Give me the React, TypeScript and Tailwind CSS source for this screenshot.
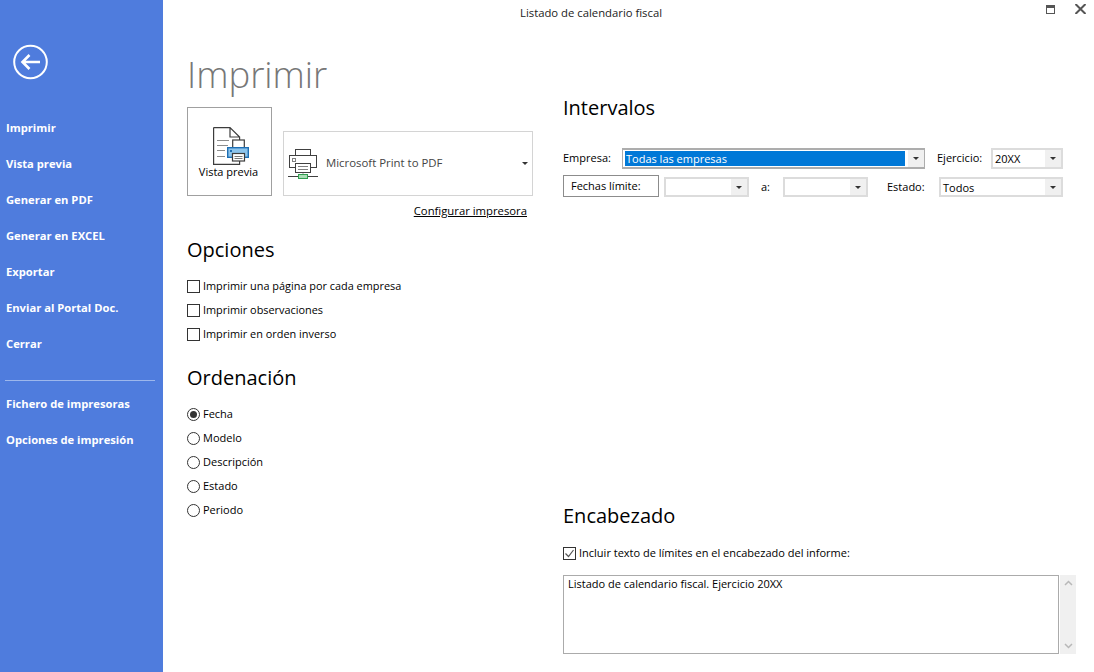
const font = { fontFamily: '"Open Sans", "Noto Sans", sans-serif' };

const menuTop = ['Imprimir', 'Vista previa', 'Generar en PDF', 'Generar en EXCEL', 'Exportar', 'Enviar al Portal Doc.', 'Cerrar'];
const menuBottom = ['Fichero de impresoras', 'Opciones de impresión'];
const checks = ['Imprimir una página por cada empresa', 'Imprimir observaciones', 'Imprimir en orden inverso'];
const radios = ['Fecha', 'Modelo', 'Descripción', 'Estado', 'Periodo'];

const Caret = ({ className = '' }: { className?: string }) => (
  <svg width="6" height="3" viewBox="0 0 6 3" className={className}>
    <path d="M0 0h6L3 3z" fill="#333" />
  </svg>
);

const Combo = ({ value, className }: { value?: string; className: string }) => (
  <div className={`flex border-2 border-[#dcdcdc] bg-white ${className}`}>
    <div className="flex-1 pl-[2px] text-[11px] leading-[18px] text-black">{value}</div>
    <div className="flex w-[16px] items-center justify-center bg-[#f0f0f0]">
      <Caret />
    </div>
  </div>
);

const DocPrinterIcon = () => (
  <svg width="36" height="38" viewBox="0 0 36 38" className="ml-[3px] block">
    <path d="M0.6 0.6H17L26.6 10V34V37.4H0.6V0.6M17 0.6V10H26.6" fill="#fff" stroke="#3c3c3c" strokeWidth="1.2" />
    <path d="M4 13.5h12M4 18.5h11M4 23.5h8M4 29.5h8" stroke="#8c8c8c" strokeWidth="1.2" />
    <rect x="19.7" y="13" width="11.6" height="8" fill="#fff" stroke="#3c3c3c" strokeWidth="1.2" />
    <rect x="14.7" y="20.7" width="20.6" height="9.6" fill="#8cc4ec" stroke="#1e6fb4" strokeWidth="1.4" />
    <rect x="17" y="23" width="2" height="2" fill="#1e6fb4" />
    <rect x="19.5" y="26.5" width="12" height="7.5" fill="#fff" stroke="#3c3c3c" strokeWidth="1.2" />
    <path d="M21.5 29.5h8M21.5 31.5h8" stroke="#7a7a7a" strokeWidth="1" />
  </svg>
);

const NetworkPrinterIcon = () => (
  <svg width="30" height="30" viewBox="0 0 30 30" className="block">
    <rect x="7.5" y="0.5" width="15" height="6" fill="#fff" stroke="#404040" />
    <rect x="1.5" y="6.5" width="27" height="12" fill="#fff" stroke="#404040" />
    <rect x="4.5" y="9.5" width="3" height="3" fill="#fff" stroke="#808080" />
    <rect x="7.5" y="14.5" width="15" height="9" fill="#fff" stroke="#404040" />
    <path d="M10 17.5h10M10 20.5h10" stroke="#808080" />
    <path d="M15 24v2" stroke="#a0a0a0" />
    <path d="M0 27.5h30" stroke="#404040" />
    <rect x="10.5" y="25.5" width="9" height="4" fill="#a9dcb4" stroke="#2f9e4f" />
  </svg>
);

const Check = ({ checked }: { checked?: boolean }) => (
  <div className="flex h-[13px] w-[13px] shrink-0 items-center justify-center border border-[#333] bg-white">
    {checked && (
      <svg width="11" height="11" viewBox="0 0 11 11">
        <path d="M1.5 5.5L4.5 8.5L9.5 2" fill="none" stroke="#555" strokeWidth="1.2" />
      </svg>
    )}
  </div>
);

const Radio = ({ checked }: { checked?: boolean }) => (
  <div className="flex h-[13px] w-[13px] shrink-0 items-center justify-center rounded-full border border-[#333] bg-white">
    {checked && <div className="h-[7px] w-[7px] rounded-full bg-[#333]" />}
  </div>
);

export default function App() {
  return (
    <div className="flex h-[672px] w-[1094px] overflow-hidden bg-white text-black" style={font}>
      <aside className="flex h-full w-[163px] shrink-0 flex-col bg-[#4f7cdd] pl-[6px] text-white">
        <svg width="36" height="36" viewBox="0 0 36 36" className="ml-[7px] mt-[44px] block">
          <circle cx="17.5" cy="18" r="16.3" fill="none" stroke="#fff" strokeWidth="2" />
          <path d="M27 18H11M16.5 11L9.5 18L16.5 25" fill="none" stroke="#fff" strokeWidth="2.6" />
        </svg>
        <nav className="mt-[30px] flex flex-col">
          {menuTop.map(item => (
            <div key={item} className="h-[36px] text-[11.2px] font-bold leading-[36px]">
              {item}
            </div>
          ))}
        </nav>
        <div className="ml-[-1px] mt-[18px] h-px w-[150px] bg-[#9db7ec]" />
        <nav className="mt-[5px] flex flex-col">
          {menuBottom.map(item => (
            <div key={item} className="h-[36px] text-[11.2px] font-bold leading-[36px]">
              {item}
            </div>
          ))}
        </nav>
      </aside>

      <main className="min-w-0 flex-1">
        <header className="flex h-[26px] items-start">
          <div className="ml-[357px] text-[11.3px] leading-[26px] text-[#222]">Listado de calendario fiscal</div>
          <div className="ml-auto mr-[8px] mt-[4px] flex items-start gap-[20px]">
            <div className="mt-[1px] h-[9px] w-[9px] border border-[#555] border-t-[3px]" />
            <svg width="11" height="10" viewBox="0 0 11 10" className="block">
              <path d="M0.5 0L10.5 10M10.5 0L0.5 10" stroke="#555" strokeWidth="2" />
            </svg>
          </div>
        </header>

        <div className="flex">
          <section className="ml-[24px] w-[352px] shrink-0">
            <h1 className="mt-[20px] h-[61px] text-[36.5px] font-light leading-[56px] text-[#777]">Imprimir</h1>
            <div className="flex items-end gap-[11px]">
              <button className="flex h-[89px] w-[85px] flex-col items-center border border-[#a0a0a0] pt-[19px]">
                <DocPrinterIcon />
                <span className="mr-[2px] mt-[-1px] text-[11px] leading-[16px] text-black">Vista previa</span>
              </button>
              <div className="flex h-[65px] w-[250px] items-center border border-[#d4d4d4] pl-[4px] pr-[4px]">
                <NetworkPrinterIcon />
                <span className="mb-[2px] ml-[8px] flex-1 text-[11.4px] text-[#444]">Microsoft Print to PDF</span>
                <Caret />
              </div>
            </div>
            <div className="mr-[12px] mt-[7px] text-right text-[11.3px] leading-[16px] underline">Configurar impresora</div>

            <h2 className="mt-[17px] text-[20px] leading-[28px]">Opciones</h2>
            <div className="mt-[14px] flex flex-col gap-[8px]">
              {checks.map(item => (
                <label key={item} className="flex h-[16px] items-center gap-[3px] text-[10.9px]">
                  <Check />
                  {item}
                </label>
              ))}
            </div>

            <h2 className="mt-[22px] text-[20px] leading-[28px]">Ordenación</h2>
            <div className="mt-[14px] flex flex-col gap-[8px]">
              {radios.map((item, i) => (
                <label key={item} className="flex h-[16px] items-center gap-[3px] text-[11px]">
                  <Radio checked={i === 0} />
                  {item}
                </label>
              ))}
            </div>
          </section>

          <section className="ml-[24px] w-[513px] shrink-0">
            <h2 className="mt-[68px] text-[20px] leading-[28px]">Intervalos</h2>
            <div className="mt-[26px] flex items-center text-[11px]">
              <span className="w-[59px]">Empresa:</span>
              <div className="flex h-[21px] w-[303px] border-x border-y-2 border-[#adadad] bg-white">
                <div className="my-[1px] ml-[2px] w-[280px] bg-[#0078d7] pl-[1px] leading-[15px] text-white">Todas las empresas</div>
                <div className="ml-auto flex w-[16px] items-center justify-center bg-[#f0f0f0]">
                  <Caret />
                </div>
              </div>
              <span className="ml-[12px] w-[54px]">Ejercicio:</span>
              <Combo value="20XX" className="h-[21px] w-[72px]" />
            </div>
            <div className="mt-[6px] flex items-center text-[11px]">
              <div className="flex h-[22px] w-[96px] items-center border border-[#8c8c8c] pl-[7px]">Fechas límite:</div>
              <Combo className="ml-[5px] mt-[2px] h-[20px] w-[85px]" />
              <span className="ml-[12px] mt-[2px] w-[22px]">a:</span>
              <Combo className="mt-[2px] h-[20px] w-[85px]" />
              <span className="ml-[19px] mt-[2px] w-[52px]">Estado:</span>
              <Combo value="Todos" className="mt-[2px] h-[20px] w-[124px]" />
            </div>

            <h2 className="mt-[305px] text-[20px] leading-[28px]">Encabezado</h2>
            <label className="mt-[15px] flex h-[16px] items-center gap-[3px] text-[11px]">
              <Check checked />
              Incluir texto de límites en el encabezado del informe:
            </label>
            <div className="mt-[14px] flex">
              <div className="h-[79px] w-[496px] border border-[#ababab] px-[4px] text-[11px] leading-[16px]">
                Listado de calendario fiscal. Ejercicio 20XX
              </div>
              <div className="ml-[1px] flex h-[79px] w-[16px] flex-col items-center justify-between bg-[#f0f0f0] py-[5px]">
                <svg width="9" height="6" viewBox="0 0 9 6">
                  <path d="M1 5L4.5 1.5L8 5" fill="none" stroke="#b8b8b8" strokeWidth="1.5" />
                </svg>
                <svg width="9" height="6" viewBox="0 0 9 6">
                  <path d="M1 1L4.5 4.5L8 1" fill="none" stroke="#b8b8b8" strokeWidth="1.5" />
                </svg>
              </div>
            </div>
          </section>
        </div>
      </main>
    </div>
  );
}
